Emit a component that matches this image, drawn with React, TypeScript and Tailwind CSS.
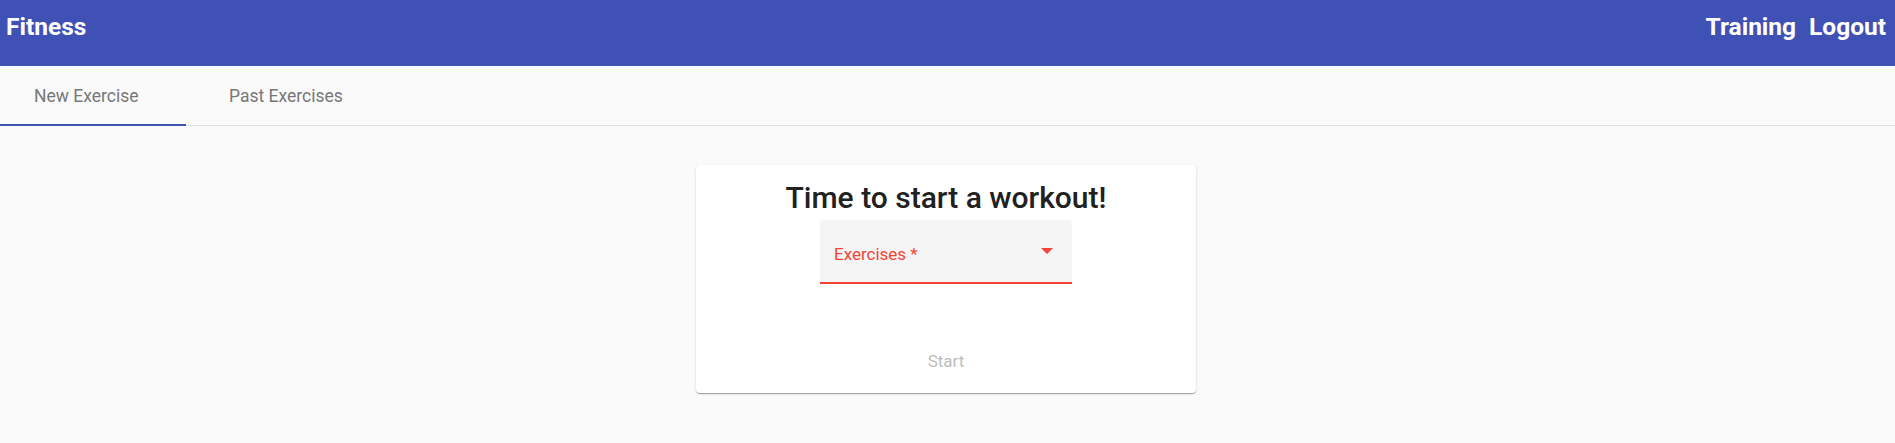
import { useState } from "react";

export default function App() {
  const [tab, setTab] = useState(0);
  const tabs = [
    { label: "New Exercise", cls: "w-[186px] pl-[34px]" },
    { label: "Past Exercises", cls: "w-[186px] pl-[43px]" },
  ];

  return (
    <div className="min-h-[443px] bg-[#fafafa] font-['Roboto',sans-serif]">
      {/* Toolbar */}
      <header className="h-[66px] bg-[#3f51b5] text-white flex justify-between pt-[13px] pl-[6px] pr-[9px]">
        <span className="text-[24.5px] leading-[28px] font-bold">Fitness</span>
        <nav className="flex gap-[13px] text-[24.5px] leading-[28px] font-bold">
          <a>Training</a>
          <a>Logout</a>
        </nav>
      </header>

      {/* Tabs */}
      <div className="flex border-b border-[#e0e0e0] h-[60px]">
        {tabs.map((t, i) => (
          <button
            key={t.label}
            onClick={() => setTab(i)}
            className={`relative flex items-center text-left text-[17.5px] leading-[20px] text-[#777777] ${t.cls}`}
          >
            {t.label}
            {tab === i && (
              <span className="absolute left-0 right-0 bottom-[-1px] h-[2px] bg-[#3f51b5]" />
            )}
          </button>
        ))}
      </div>

      {/* Card */}
      <div className="flex justify-center pt-[39px] pr-[3px]">
        <div className="w-[500px] h-[228px] bg-white rounded flex flex-col items-center pt-[15px] shadow-[0_2px_1px_-1px_rgba(0,0,0,0.2),0_1px_1px_0_rgba(0,0,0,0.14),0_1px_3px_0_rgba(0,0,0,0.12)]">
          <h1 className="text-[30px] leading-[36px] font-medium text-[#212121]">
            Time to start a workout!
          </h1>
          <div className="mt-[4px] w-[252px] h-[64px] bg-[#f5f5f5] rounded-t border-b-2 border-[#f44336] relative pt-[23px] pl-[14px]">
            <span className="text-[17px] leading-[20px] text-[#f44336]">Exercises *</span>
            <span className="absolute right-[19px] top-[28px] w-0 h-0 border-l-[6px] border-r-[6px] border-t-[6px] border-l-transparent border-r-transparent border-t-[#f44336]" />
          </div>
          <button disabled className="mt-[67px] text-[17px] leading-[20px] text-[#bdbdbd]">
            Start
          </button>
        </div>
      </div>
    </div>
  );
}
